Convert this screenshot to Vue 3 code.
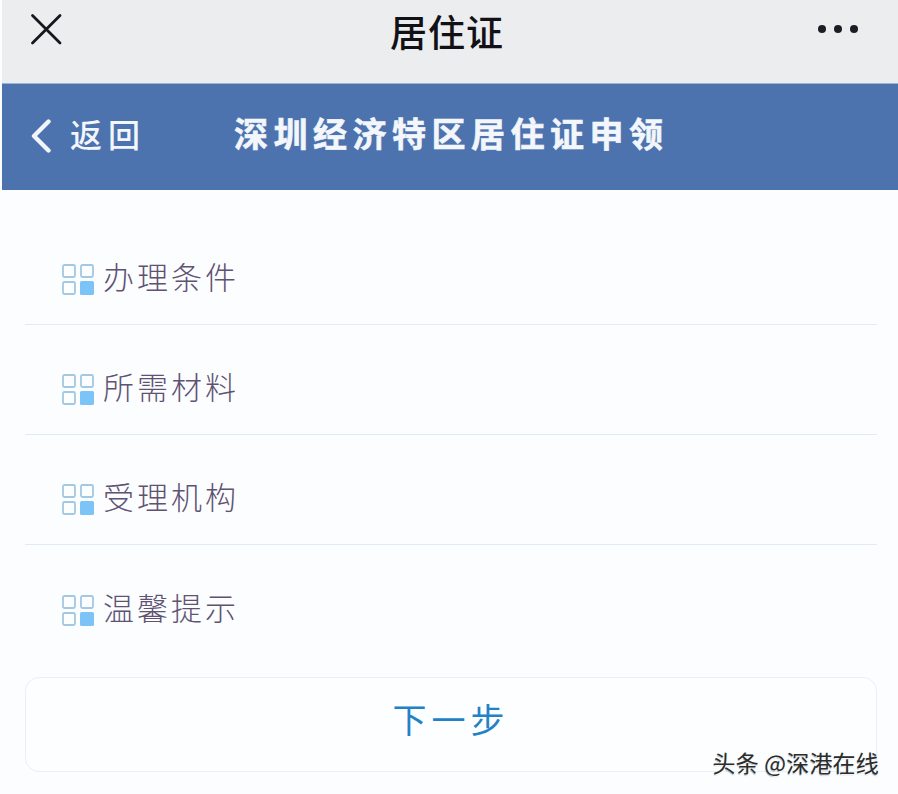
<script setup>
const rows = ['办理条件', '所需材料', '受理机构', '温馨提示']
</script>

<template>
  <div class="page">
    <header class="top">
      <svg class="close" viewBox="0 0 32 32" width="32" height="32">
        <path d="M2.5 2.5 L30 30 M30 2.5 L2.5 30" stroke="#16161c" stroke-width="2.8" stroke-linecap="round" fill="none" />
      </svg>
      <div class="top-title">居住证</div>
      <div class="dots"><i></i><i></i><i></i></div>
    </header>
    <nav class="bar">
      <div class="back">
        <svg viewBox="0 0 22 34" width="22" height="34">
          <path d="M18.5 2.5 L4 17 L18.5 31.5" stroke="#f2f5fa" stroke-width="4.4" stroke-linecap="round" stroke-linejoin="round" fill="none" />
        </svg>
        <span>返回</span>
      </div>
      <div class="bar-title">深圳经济特区居住证申领</div>
    </nav>
    <main class="content">
      <ul class="list">
        <li v-for="r in rows" :key="r" class="row">
          <svg class="grid" viewBox="0 0 32 31" width="32" height="31">
            <rect x="1" y="1" width="12" height="12" rx="1.5" fill="none" stroke="#a2c8e4" stroke-width="1.8" />
            <rect x="19" y="1" width="12" height="12" rx="1.5" fill="none" stroke="#a2c8e4" stroke-width="1.8" />
            <rect x="1" y="18" width="12" height="12" rx="1.5" fill="none" stroke="#a2c8e4" stroke-width="1.8" />
            <rect x="18" y="17" width="14" height="14" rx="1.5" fill="#7cc4f8" />
          </svg>
          <span class="label">{{ r }}</span>
        </li>
      </ul>
      <button class="next">下一步</button>
    </main>
    <div class="mark">头条 @深港在线</div>
  </div>
</template>

<style scoped>
.page {
  position: relative;
  width: 898px;
  height: 794px;
  overflow: hidden;
  background: #fbfdff;
  padding-left: 2px;
  box-sizing: border-box;
  font-family: "Noto Sans CJK SC", "Liberation Sans", sans-serif;
}
.top {
  height: 84px;
  background: #ecedef;
  display: flex;
  align-items: flex-start;
  justify-content: space-between;
  box-sizing: border-box;
  padding: 13px 40px 0 28px;
  border-bottom: 1px solid #8fb8de;
}
.close { flex: none; }
.top-title {
  font-size: 37px;
  line-height: 36px;
  font-weight: 500;
  letter-spacing: 1px;
  color: #121216;
  margin-left: 14px;
}
.dots {
  display: flex;
  gap: 8px;
  margin-top: 12px;
}
.dots i {
  width: 8px;
  height: 8px;
  border-radius: 50%;
  background: #1c1c26;
}
.bar {
  height: 106px;
  background: #4c73ae;
  display: flex;
  align-items: center;
  color: #f3f6fb;
  padding: 0 0 8px 28px;
  box-sizing: border-box;
}
.back {
  display: flex;
  align-items: center;
  gap: 18px;
  width: 204px;
  font-size: 32px;
  font-weight: 500;
  letter-spacing: 6px;
  line-height: 40px;
}
.back svg { flex: none; margin-top: 6px; }
.bar-title {
  font-size: 34px;
  line-height: 40px;
  font-weight: 700;
  letter-spacing: 5.5px;
  white-space: nowrap;
  -webkit-text-stroke: 0.6px #f3f6fb;
}
.content {
  padding: 25px 21px 0 23px;
}
.list {
  list-style: none;
  margin: 0;
  padding: 0;
}
.row {
  height: 110px;
  box-sizing: border-box;
  border-bottom: 1px solid #e1ebf4;
  display: flex;
  align-items: flex-end;
  gap: 9px;
  padding: 0 0 29px 37px;
}
.row:last-child { border-bottom: none; height: 125px; padding-bottom: 44px; }
.grid { flex: none; }
.label {
  font-size: 31px;
  line-height: 36px;
  font-weight: 300;
  letter-spacing: 3px;
  color: #5f5272;
  margin-bottom: 1px;
}
.next {
  display: block;
  width: 100%;
  height: 95px;
  margin-top: 7px;
  background: #fdfeff;
  border: 1px solid #e8f0f6;
  border-radius: 14px;
  color: #2382c6;
  font-family: inherit;
  font-size: 34px;
  letter-spacing: 5px;
  padding: 0 0 12px;
}
.mark {
  position: absolute;
  right: 19px;
  bottom: 19px;
  font-size: 23px;
  line-height: 26px;
  font-weight: 400;
  letter-spacing: 0.2px;
  color: #2c2c2c;
  text-shadow: 1px 1px 0 rgba(255, 255, 255, 0.9), 0 1px 1px rgba(0, 0, 0, 0.45);
  white-space: nowrap;
}
</style>
